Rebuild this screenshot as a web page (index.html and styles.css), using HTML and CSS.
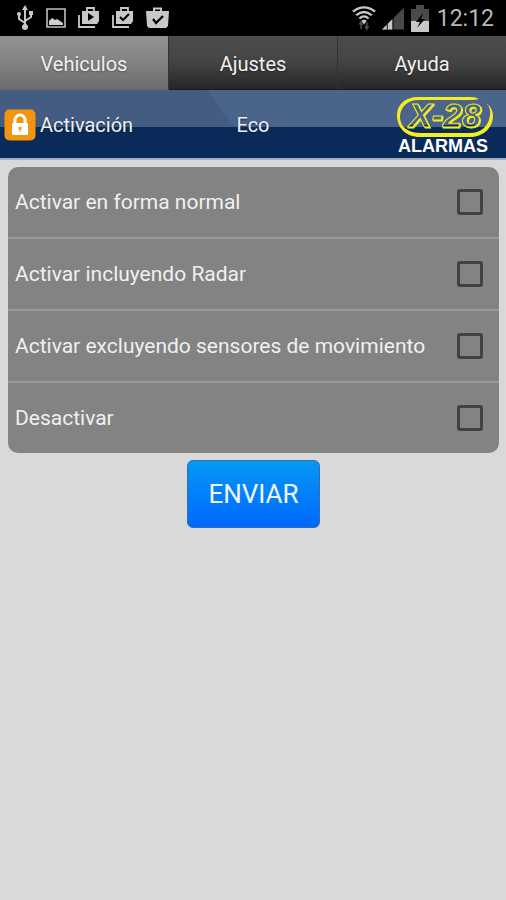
FILE: index.html
```html
<!DOCTYPE html>
<html lang="es">

<head>
    <meta charset="UTF-8">
    <meta name="viewport" content="width=device-width, initial-scale=1.0">
    <title>X-28 Alarmas</title>
    <link rel="stylesheet" href="styles.css">
</head>

<body>
    <div class="status-bar">
        <div class="status-icons">
            <!-- usb -->
            <svg width="18" height="26" viewBox="0 0 18 26" fill="none" stroke="#c8c8c8" stroke-width="2">
                <path d="M9 4v17M3 10v4l6 4M15 9v3l-6 4" />
                <path d="M9 0l3 5H6z" fill="#c8c8c8" stroke="none" />
                <circle cx="9" cy="22" r="3" fill="#c8c8c8" stroke="none" />
                <circle cx="3" cy="9" r="2" fill="#c8c8c8" stroke="none" />
                <path d="M13 6h4v4h-4z" fill="#c8c8c8" stroke="none" />
            </svg>
            <!-- screenshot -->
            <svg width="20" height="20" viewBox="0 0 20 20">
                <path d="M1 1h18v18H1z" fill="none" stroke="#c0c0c0" stroke-width="1.6" />
                <path d="M3 17v-4l3-3 3 2 2-1 6 4v2z" fill="#d0d0d0" />
            </svg>
            <!-- store, playing -->
            <svg width="22" height="22" viewBox="0 0 22 22">
                <path d="M1 8v12h16" fill="none" stroke="#c8c8c8" stroke-width="1.8" />
                <path d="M9 4V1h7v3" fill="none" stroke="#c8c8c8" stroke-width="1.8" />
                <path d="M4 4h17v10l-2 3H4z" fill="#c8c8c8" />
                <path d="M10 6l6 4-6 4z" fill="#000" />
            </svg>
            <!-- store, updated -->
            <svg width="22" height="22" viewBox="0 0 22 22">
                <path d="M1 8v12h16" fill="none" stroke="#c8c8c8" stroke-width="1.8" />
                <path d="M9 4V1h7v3" fill="none" stroke="#c8c8c8" stroke-width="1.8" />
                <path d="M4 4h17v10l-2 3H4z" fill="#c8c8c8" />
                <path d="M8 10l3 3 6-6" fill="none" stroke="#000" stroke-width="2" />
            </svg>
            <svg width="23" height="22" viewBox="0 0 23 22">
                <path d="M8 5V1.5h7V5" fill="none" stroke="#c8c8c8" stroke-width="2" />
                <path d="M0 4h23l-1 15-2 2H3l-2-2z" fill="#c8c8c8" />
                <path d="M7 12l3 4 7-7" fill="none" stroke="#000" stroke-width="2.2" />
            </svg>
        </div>
        <div class="status-right">
            <!-- wifi -->
            <svg width="24" height="26" viewBox="0 0 26 26" fill="none" stroke="#c8c8c8" stroke-width="2.4">
                <path d="M1 6q12-9 24 0M4.5 10q8.500-7 17 0M8 13.500q5-4.500 10 0" />
                <path d="M10 16q3-2 6 0L13 20z" fill="#c8c8c8" stroke="none" />
                <path d="M10 25v-7M8 20l2-3 2 3M16 18v7M14 22l2 3 2-3" stroke="#4c4c4c" stroke-width="1.8" />
            </svg>
            <!-- signal -->
            <svg width="23" height="24" viewBox="0 0 24 24">
                <path d="M0 24L23 1v23z" fill="#484848" />
                <path d="M0 24L11 13v11z" fill="#c8c8c8" />
                <path d="M5.500 17v7M11.500 10v14" stroke="#000" />
            </svg>
            <!-- battery -->
            <svg width="18" height="27" viewBox="0 0 18 27">
                <path d="M0 4h5V0h8v4h5v12H0z" fill="#4a4a4a" />
                <path d="M0 16h18v11H0z" fill="#c8c8c8" />
                <path d="M12 8l-7 9h4l-3 6 8-9h-4z" fill="#000" />
            </svg>
            <span class="clock">12:12</span>
        </div>
    </div>

    <nav class="tabs">
        <a class="tab active" href="#vehiculos">Vehiculos</a>
        <a class="tab" href="#ajustes">Ajustes</a>
        <a class="tab" href="#ayuda">Ayuda</a>
    </nav>

    <header class="title-bar">
        <div class="section">
            <svg class="lock" width="32" height="32" viewBox="0 0 32 32">
                <rect x="0.5" y="0.5" width="31" height="31" rx="5" fill="#f39410" />
                <path d="M11 15v-4a5 5 0 0 1 10 0v4" fill="none" stroke="#fff" stroke-width="3" />
                <rect x="8" y="14" width="16" height="12" rx="1" fill="#fff" />
                <path d="M14.500 18h3v2l-1 1v2h-1v-2l-1-1z" fill="#f39410" />
            </svg>
            <h1>Activación</h1>
        </div>
        <span class="vehicle">Eco</span>
        <div class="brand">
            <svg width="98" height="60" viewBox="0 0 98 60" role="img" aria-label="X-28 Alarmas">
                <defs>
                    <linearGradient id="split" gradientUnits="userSpaceOnUse" x1="0" y1="0" x2="0" y2="60">
                        <stop offset="0.5" stop-color="#4b648c" />
                        <stop offset="0.5" stop-color="#0a2a59" />
                    </linearGradient>
                </defs>
                <path d="M83 4Q80 2 75 2H22C9 2 1 10 1 20c0 13 9 22 23 22h50c14 0 23-10 23-21q0-8-7-13q5 5 4 12c-1 11-9 18-20 18H25C12 38 4 32 4 22C4 12 12 5 22 5h53q4 0 8-1z" fill="#f4ee20" />
                <text class="model" x="13" y="32" fill="url(#split)">X-28</text>
                <text class="maker" x="2" y="57">ALARMAS</text>
            </svg>
        </div>
    </header>

    <form class="actions">
        <div class="options">
            <label class="option"><span>Activar en forma normal</span><input type="checkbox" name="normal"></label>
            <label class="option"><span>Activar incluyendo Radar</span><input type="checkbox" name="radar"></label>
            <label class="option"><span>Activar excluyendo sensores de movimiento</span><input type="checkbox" name="sensores"></label>
            <label class="option"><span>Desactivar</span><input type="checkbox" name="desactivar"></label>
        </div>
        <button class="send" type="button">ENVIAR</button>
    </form>
</body>

</html>
```
FILE: styles.css
```css
* {
    box-sizing: border-box;
}

body {
    margin: 0;
    min-height: 100vh;
    background-color: #d9d9d9;
    font-family: Roboto, "Liberation Sans", sans-serif;
    font-size: 21px;
    color: #f0f0f0;
}

.status-bar {
    display: flex;
    justify-content: space-between;
    align-items: center;
    height: 36px;
    padding: 0 12px 0 16px;
    background-color: #000;
}

.status-icons {
    display: flex;
    align-items: center;
    gap: 12px;
}

.status-right {
    display: flex;
    align-items: center;
    gap: 6px;
}

.clock {
    margin-left: 2px;
    font-size: 23px;
    color: #b8b8b8;
}

.tabs {
    display: flex;
    height: 54px;
}

.tab {
    flex: 1;
    display: flex;
    align-items: center;
    justify-content: center;
    padding-top: 2px;
    background: linear-gradient(#4c4c4c, #444 50%, #262626);
    border-right: 1px solid #333;
    border-bottom: 1px solid #1c1c14;
    color: #f0f0f0;
    font-size: 20px;
    text-decoration: none;
    text-shadow: 0 1px 2px #222;
}

.tab:last-child {
    border-right: none;
}

.tab.active {
    background: linear-gradient(#929292, #868686 40%, #6c6c6c);
    border-bottom-color: #666;
    text-shadow: 0 1px 2px #555;
}

.title-bar {
    display: grid;
    grid-template-columns: 1fr auto 1fr;
    align-items: center;
    height: 70px;
    padding: 2px 12px 0 4px;
    background:
        linear-gradient(transparent 37px, #0a2a59 37px),
        linear-gradient(54deg, #445c82 207px, #4b648c 209px);
    border-bottom: 2px solid #a9afc2;
}

.section {
    display: flex;
    align-items: center;
    gap: 4px;
}

.title-bar h1,
.vehicle {
    margin: 0;
    font-size: 20px;
    font-weight: normal;
    text-shadow: 0 1px 2px #12264a;
}

.vehicle {
    padding-left: 8px;
}

.brand {
    display: flex;
    justify-content: flex-end;
}

.model {
    font-family: "Liberation Sans", sans-serif;
    font-size: 34px;
    font-style: italic;
    font-weight: bold;
    stroke: #f4ee20;
    filter: drop-shadow(1px 1px 0 #f4ee20);
}

.maker {
    font-family: "Liberation Sans", sans-serif;
    font-size: 18px;
    font-weight: bold;
    fill: #fff;
}

.actions {
    display: flex;
    flex-direction: column;
    align-items: center;
    gap: 7px;
    padding: 7px 7px 0 8px;
}

.options {
    width: 100%;
    border-radius: 10px;
    background-color: #838383;
    overflow: hidden;
}

.option {
    display: flex;
    align-items: center;
    justify-content: space-between;
    height: 70px;
    padding: 0 16px 0 7px;
}

.option + .option {
    height: 72px;
    border-top: 2px solid #999;
}

.option input {
    appearance: none;
    width: 26px;
    height: 26px;
    margin: 0;
    border: 3px solid #414141;
    border-radius: 3px;
}

.option input:checked {
    background-color: #0a84ff;
}

.send {
    width: 133px;
    height: 68px;
    border: 1px solid #3a6ca8;
    border-radius: 6px;
    background: linear-gradient(#0698f4, #0068ff);
    color: #f0f6ff;
    font-family: inherit;
    font-size: 26px;
    cursor: pointer;
}
```
